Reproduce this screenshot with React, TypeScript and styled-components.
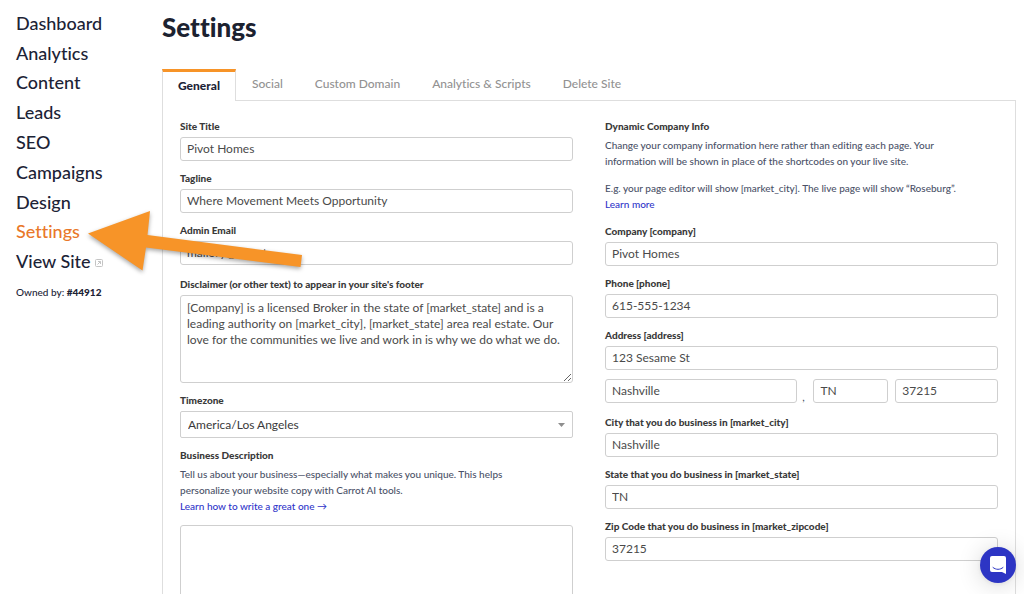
import React, { useId } from 'react';
import styled, { createGlobalStyle } from 'styled-components';

const GlobalStyle = createGlobalStyle`
  *, *::before, *::after { box-sizing: border-box; }
  html { scrollbar-width: none; }
  body {
    margin: 0;
    background: #fff;
    color: #444b5e;
    font-family: Lato, "Liberation Sans", sans-serif;
    font-size: 11px;
    font-variant-ligatures: none;
  }
  input, textarea, select, button { font-family: inherit; }
`;

const Page = styled.div`
  position: relative;
  display: flex;
  align-items: flex-start;
  padding-right: 8px;
`;

const Sidebar = styled.aside`
  flex: 0 0 162px;
  padding: 8px 0 0 16px;
`;

const NavList = styled.ul`
  display: grid;
  grid-auto-rows: 1fr;
  height: 268px;
  margin: 0;
  padding: 0;
  list-style: none;
`;

const NavLink = styled.a<{ $active?: boolean }>`
  display: inline-flex;
  align-items: center;
  gap: 4px;
  height: 100%;
  font-size: 18px;
  font-weight: 500;
  color: ${(p) => (p.$active ? '#e9782a' : '#1c2336')};
  text-decoration: none;

  & > svg { margin-top: 4px; }
`;

const Owner = styled.p`
  margin: 8px 0 0;
  font-size: 10px;
  font-weight: 500;
  line-height: 16px;
  color: #1c2336;

  & > strong { font-weight: 900; }
`;

const Main = styled.main`
  flex: 1;
  min-width: 0;
`;

const Title = styled.h1`
  margin: 0;
  padding-top: 11px;
  font-size: 26px;
  line-height: 32px;
  font-weight: 900;
  color: #1c2230;
`;

const Tabs = styled.nav`
  display: flex;
  align-items: stretch;
  height: 32px;
  margin-top: 26px;
`;

const Tab = styled.a<{ $active?: boolean }>`
  position: relative;
  display: flex;
  align-items: center;
  height: 32px;
  padding: ${(p) => (p.$active ? '0 15px 2px' : '0 16px 4px')};
  border: solid ${(p) => (p.$active ? '#dedede' : 'transparent')};
  border-width: ${(p) => (p.$active ? '0 1px' : '0')};
  border-top: ${(p) => (p.$active ? '3px solid #f79428' : '0')};
  background: ${(p) => (p.$active ? '#fff' : 'transparent')};
  font-size: 12px;
  font-weight: ${(p) => (p.$active ? 900 : 500)};
  color: ${(p) => (p.$active ? '#1c2336' : '#929292')};
  text-decoration: none;
  white-space: nowrap;
`;

const Panel = styled.form`
  display: grid;
  grid-template-columns: 1fr 1fr;
  gap: 32px;
  margin-top: -1px;
  padding: 17px;
  border: 1px solid #dedede;
`;

const Column = styled.div`
  display: flex;
  flex-direction: column;
  gap: 11px;
  min-width: 0;
`;

const Section = styled.section`
  display: flex;
  flex-direction: column;
  gap: 9px;
`;

const FieldBox = styled.div`
  display: flex;
  flex-direction: column;
  gap: 3px;
`;

const Label = styled.label`
  font-size: 10px;
  line-height: 16px;
  font-weight: 900;
  color: #3a3a3a;
`;

const Heading = styled.h2`
  margin: 0;
  font-size: 10px;
  line-height: 16px;
  font-weight: 900;
  color: #3a3a3a;
`;

const Input = styled.input`
  width: 100%;
  min-width: 0;
  height: 24px;
  padding: 0 6px 1px;
  border: 1px solid #cfcfcf;
  border-radius: 3px;
  background: #fff;
  font-size: 12px;
  color: #4a4a4a;
`;

const TextArea = styled.textarea<{ $tall?: boolean }>`
  display: block;
  width: 100%;
  height: ${(p) => (p.$tall ? '120px' : '88px')};
  margin-top: ${(p) => (p.$tall ? '8px' : '0')};
  padding: 4px 6px;
  border: 1px solid #cfcfcf;
  border-radius: 3px;
  background: #fff;
  font-size: 12px;
  line-height: 16px;
  color: #4a4a4a;
`;

const SelectWrap = styled.div`
  display: grid;
  align-items: center;

  & > * { grid-area: 1 / 1; }
  & > svg { justify-self: end; margin-right: 8px; pointer-events: none; }
`;

const Select = styled.select`
  width: 100%;
  height: 27px;
  padding: 0 7px;
  border: 1px solid #cfcfcf;
  border-radius: 2px;
  background: #fff;
  appearance: none;
  font-size: 12px;
  color: #3a3a3a;
`;

const Text = styled.p`
  margin: 0;
  font-size: 10px;
  font-weight: 500;
  line-height: 16px;
  color: #4b5268;
`;

const TextLink = styled.a`
  color: #2f35c9;
  text-decoration: none;
`;

const CityRow = styled.div`
  display: grid;
  grid-template-columns: 193fr 16px 75fr 7px 103fr;
  align-items: end;

  & > :last-child { grid-column: 5; }
`;

const Comma = styled.span`
  text-align: center;
  padding-right: 4px;
  line-height: 12px;
`;

const Arrow = styled.svg`
  position: absolute;
  left: 80px;
  top: 200px;
  width: 230px;
  height: 80px;
  pointer-events: none;
  filter: drop-shadow(0 2px 2px rgba(0, 0, 0, 0.35));
`;

const ChatButton = styled.button`
  position: fixed;
  right: 8px;
  bottom: 11px;
  display: flex;
  align-items: center;
  justify-content: center;
  width: 36px;
  height: 36px;
  padding: 0;
  border: 0;
  border-radius: 50%;
  background: #2d35c4;
  box-shadow: 0 1px 5px rgba(0, 0, 0, 0.08), 0 2px 24px rgba(0, 0, 0, 0.16);
`;

const navItems = ['Dashboard', 'Analytics', 'Content', 'Leads', 'SEO', 'Campaigns', 'Design', 'Settings'];
const tabs = ['General', 'Social', 'Custom Domain', 'Analytics & Scripts', 'Delete Site'];

function Field({ label, value, type = 'text' }: { label: string; value: string; type?: string }) {
  const id = useId();
  return (
    <FieldBox>
      <Label htmlFor={id}>{label}</Label>
      <Input id={id} type={type} defaultValue={value} />
    </FieldBox>
  );
}

export default function App() {
  return (
    <Page>
      <GlobalStyle />
      <Sidebar>
        <NavList>
          {navItems.map((item) => (
            <li key={item}>
              <NavLink href="#" $active={item === 'Settings'}>{item}</NavLink>
            </li>
          ))}
          <li>
            <NavLink href="#">
              View Site
              <svg width="8" height="8" viewBox="0 0 8 8" fill="none" stroke="#c4c4c4">
                <rect x="0.5" y="0.5" width="7" height="7" rx="1" />
                <path d="M2.5 5.5 5.5 2.5M3 2.5h2.5V5" />
              </svg>
            </NavLink>
          </li>
        </NavList>
        <Owner>Owned by: <strong>#44912</strong></Owner>
      </Sidebar>

      <Main>
        <Title>Settings</Title>
        <Tabs>
          {tabs.map((tab, i) => (
            <Tab key={tab} href="#" $active={i === 0}>{tab}</Tab>
          ))}
        </Tabs>
        <Panel>
          <Column>
            <Section>
              <Field label="Site Title" value="Pivot Homes" />
              <Field label="Tagline" value="Where Movement Meets Opportunity" />
              <Field label="Admin Email" value="mallory@carrot" type="email" />
            </Section>
            <Section>
              <FieldBox>
                <Label htmlFor="disclaimer">Disclaimer (or other text) to appear in your site's footer</Label>
                <TextArea
                  id="disclaimer"
                  defaultValue="[Company] is a licensed Broker in the state of [market_state] and is a leading authority on [market_city], [market_state] area real estate. Our love for the communities we live and work in is why we do what we do."
                />
              </FieldBox>
              <FieldBox>
                <Label htmlFor="timezone">Timezone</Label>
                <SelectWrap>
                  <Select id="timezone" defaultValue="la">
                    <option value="la">America/Los Angeles</option>
                  </Select>
                  <svg width="7" height="4" viewBox="0 0 7 4" fill="#8e8e8e"><path d="M0 0h7L3.500 4z" /></svg>
                </SelectWrap>
              </FieldBox>
              <FieldBox>
                <Label htmlFor="description">Business Description</Label>
                <Text>
                  Tell us about your business—especially what makes you unique. This helps
                  <br />
                  personalize your website copy with Carrot AI tools.
                  <br />
                  <TextLink href="#">Learn how to write a great one →</TextLink>
                </Text>
                <TextArea id="description" $tall />
              </FieldBox>
            </Section>
          </Column>

          <Column>
            <Section>
              <FieldBox>
                <Heading>Dynamic Company Info</Heading>
                <Text>
                  Change your company information here rather than editing each page. Your
                  <br />
                  information will be shown in place of the shortcodes on your live site.
                </Text>
              </FieldBox>
            </Section>
            <Section>
              <Text>
                E.g. your page editor will show [market_city]. The live page will show “Roseburg”.
                <br />
                <TextLink href="#">Learn more</TextLink>
              </Text>
            </Section>
            <Section>
              <Field label="Company [company]" value="Pivot Homes" />
              <Field label="Phone [phone]" value="615-555-1234" type="tel" />
              <Field label="Address [address]" value="123 Sesame St" />
              <CityRow>
                <Input aria-label="City" defaultValue="Nashville" />
                <Comma>,</Comma>
                <Input aria-label="State" defaultValue="TN" />
                <Input aria-label="Zip code" defaultValue="37215" />
              </CityRow>
            </Section>
            <Section>
              <Field label="City that you do business in [market_city]" value="Nashville" />
              <Field label="State that you do business in [market_state]" value="TN" />
              <Field label="Zip Code that you do business in [market_zipcode]" value="37215" />
            </Section>
          </Column>
        </Panel>
      </Main>

      <Arrow viewBox="80 200 230 80" aria-hidden="true">
        <path d="M88 233.500 150 211 147.500 235 302 255 300.500 267 146 247.500 142.500 270.500z" fill="#f79428" />
      </Arrow>

      <ChatButton type="button" aria-label="Open chat">
        <svg width="16" height="18" viewBox="0 0 16 18">
          <path d="M2 0h12a2 2 0 0 1 2 2v16l-4-2H2a2 2 0 0 1-2-2V2a2 2 0 0 1 2-2z" fill="#fff" />
          <path d="M3 11.500c3 2.500 7 2.500 10 0" fill="none" stroke="#2d35c4" strokeLinecap="round" />
        </svg>
      </ChatButton>
    </Page>
  );
}
